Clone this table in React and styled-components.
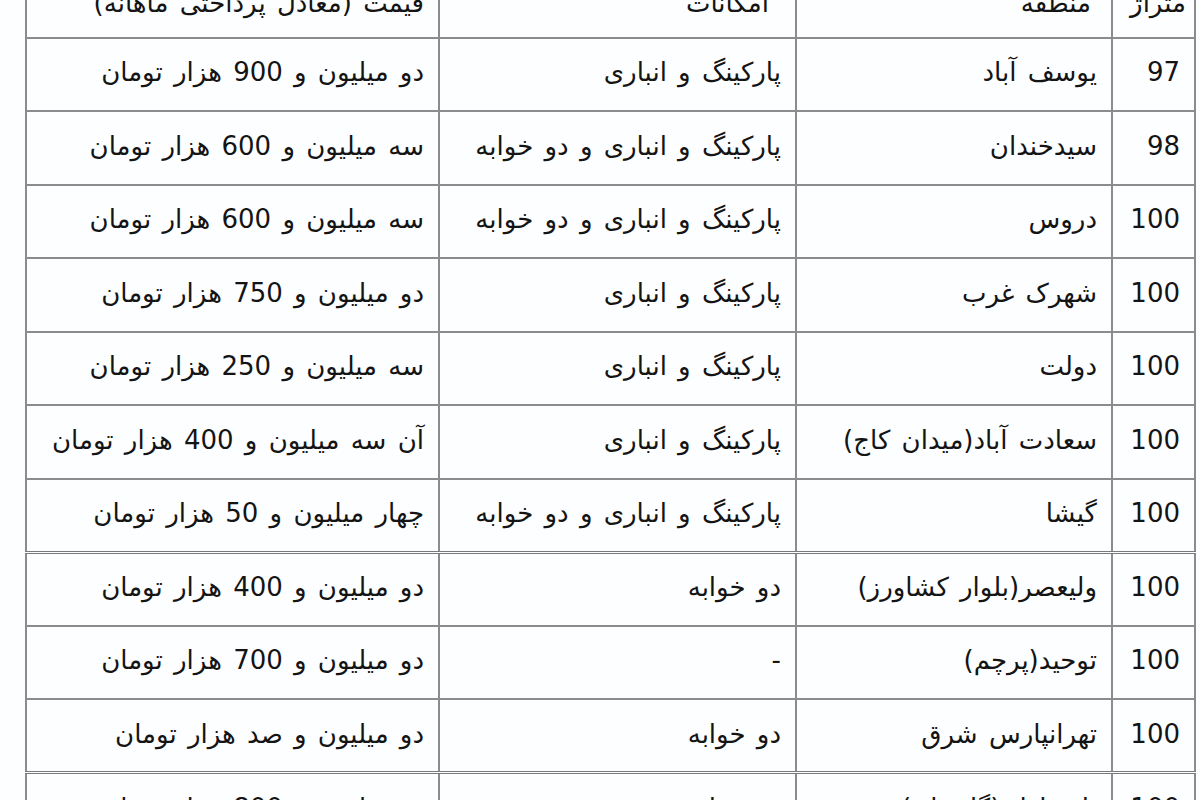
import React from "react";
import styled, { createGlobalStyle } from "styled-components";

const Global = createGlobalStyle`
  html, body { margin: 0; padding: 0; background: #ffffff; }
  body { overflow: hidden; font-family: Tahoma, "DejaVu Sans", sans-serif; }
`;

const Page = styled.div`
  width: 1200px;
  height: 800px;
  overflow: hidden;
  background: #fdfeff;
`;

const Table = styled.table`
  direction: rtl;
  border-collapse: collapse;
  margin: -37px 0 0 25px;
  width: 1169px;
  table-layout: fixed;
  border: 2px solid #707070;
  font-family: Tahoma, "DejaVu Sans", sans-serif;
  font-size: 26px;
  color: #141414;
`;

const Row = styled.tr`
  height: 73.5px;
  border-bottom: ${(p) => (p.$thick ? "3px double #7a7a7a" : "2px solid #8c8c8c")};
`;

const Cell = styled.td`
  border-left: 2px solid #8c8c8c;
  border-right: 2px solid #8c8c8c;
  padding: 0 14px 4px 6px;
  text-align: right;
  vertical-align: middle;
  white-space: nowrap;
  overflow: hidden;
  word-spacing: 3px;
`;

const HeadCell = styled(Cell).attrs({ as: "th" })`
  font-weight: normal;
  padding-right: ${(p) => p.$pr || 16}px;
  padding-top: 8px;
`;

const rows = [
  ["97", "یوسف آباد", "پارکینگ و انباری", "دو میلیون و 900 هزار تومان"],
  ["98", "سیدخندان", "پارکینگ و انباری و دو خوابه", "سه میلیون و 600 هزار تومان"],
  ["100", "دروس", "پارکینگ و انباری و دو خوابه", "سه میلیون و 600 هزار تومان"],
  ["100", "شهرک غرب", "پارکینگ و انباری", "دو میلیون و 750 هزار تومان"],
  ["100", "دولت", "پارکینگ و انباری", "سه میلیون و 250 هزار تومان"],
  ["100", "سعادت آباد(میدان کاج)", "پارکینگ و انباری", "آن سه میلیون و 400 هزار تومان"],
  ["100", "گیشا", "پارکینگ و انباری و دو خوابه", "چهار میلیون و 50 هزار تومان", true],
  ["100", "ولیعصر(بلوار کشاورز)", "دو خوابه", "دو میلیون و 400 هزار تومان"],
  ["100", "توحید(پرچم)", "-", "دو میلیون و 700 هزار تومان"],
  ["100", "تهرانپارس شرق", "دو خوابه", "دو میلیون و صد هزار تومان", true],
  ["100", "پاسداران(گلستان)", "دو خوابه", "دو میلیون و 800 هزار تومان"],
];

export default function App() {
  return (
    <Page>
      <Global />
      <Table>
        <colgroup>
          <col style={{ width: "83px" }} />
          <col style={{ width: "316px" }} />
          <col style={{ width: "357px" }} />
          <col style={{ width: "413px" }} />
        </colgroup>
        <thead>
          <Row>
            <HeadCell $pr={8}>متراژ</HeadCell>
            <HeadCell $pr={20}>منطقه</HeadCell>
            <HeadCell $pr={26}>امکانات</HeadCell>
            <HeadCell $pr={14}>قیمت (معادل پرداختی ماهانه)</HeadCell>
          </Row>
        </thead>
        <tbody>
          {rows.map((r, i) => (
            <Row key={i} $thick={r[4]}>
              <Cell>{r[0]}</Cell>
              <Cell>{r[1]}</Cell>
              <Cell>{r[2]}</Cell>
              <Cell>{r[3]}</Cell>
            </Row>
          ))}
        </tbody>
      </Table>
    </Page>
  );
}
